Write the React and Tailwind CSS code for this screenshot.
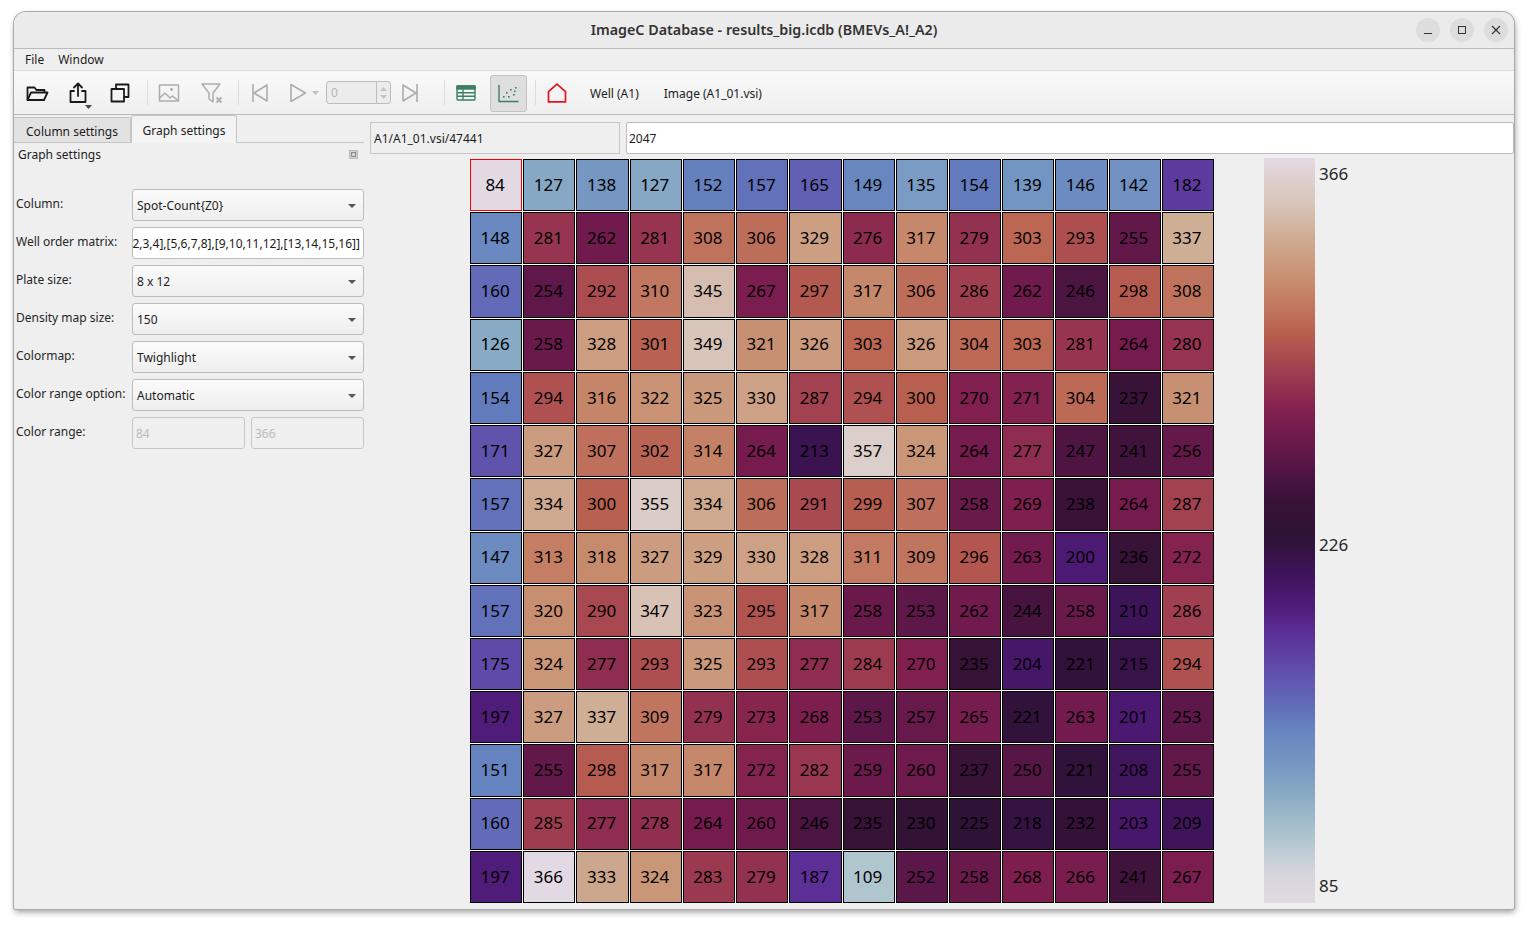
const rows = [
  [84, 127, 138, 127, 152, 157, 165, 149, 135, 154, 139, 146, 142, 182],
  [148, 281, 262, 281, 308, 306, 329, 276, 317, 279, 303, 293, 255, 337],
  [160, 254, 292, 310, 345, 267, 297, 317, 306, 286, 262, 246, 298, 308],
  [126, 258, 328, 301, 349, 321, 326, 303, 326, 304, 303, 281, 264, 280],
  [154, 294, 316, 322, 325, 330, 287, 294, 300, 270, 271, 304, 237, 321],
  [171, 327, 307, 302, 314, 264, 213, 357, 324, 264, 277, 247, 241, 256],
  [157, 334, 300, 355, 334, 306, 291, 299, 307, 258, 269, 238, 264, 287],
  [147, 313, 318, 327, 329, 330, 328, 311, 309, 296, 263, 200, 236, 272],
  [157, 320, 290, 347, 323, 295, 317, 258, 253, 262, 244, 258, 210, 286],
  [175, 324, 277, 293, 325, 293, 277, 284, 270, 235, 204, 221, 215, 294],
  [197, 327, 337, 309, 279, 273, 268, 253, 257, 265, 221, 263, 201, 253],
  [151, 255, 298, 317, 317, 272, 282, 259, 260, 237, 250, 221, 208, 255],
  [160, 285, 277, 278, 264, 260, 246, 235, 230, 225, 218, 232, 203, 209],
  [197, 366, 333, 324, 283, 279, 187, 109, 252, 258, 268, 266, 241, 267],
];

// twilight colormap, read off the colour bar
const stops = [
  [0, "#e2d9e2"], [0.04, "#d5d6db"], [0.085, "#b0c6cf"], [0.12, "#99b7c8"], [0.15, "#87a8c4"],
  [0.19, "#7496c2"], [0.22, "#6b8bc1"], [0.24, "#6380bd"], [0.256, "#6172ba"], [0.285, "#6160b3"],
  [0.32, "#5f4aa8"], [0.363, "#5b2f96"], [0.4, "#4f1b78"], [0.41, "#4c1a73"], [0.423, "#461669"],
  [0.445, "#3e1458"], [0.484, "#30123a"], [0.5, "#2f1336"], [0.54, "#371237"], [0.573, "#4b1441"],
  [0.595, "#5c1749"], [0.615, "#6a194b"], [0.635, "#741b4e"], [0.66, "#82204f"],
  [0.7, "#983650"], [0.73, "#a84850"], [0.765, "#b8604f"], [0.797, "#c0755f"], [0.826, "#c6886a"],
  [0.86, "#cb9b7e"], [0.897, "#cfae96"], [0.932, "#d7c2b5"], [0.968, "#dccfcb"], [1, "#e3d9e4"],
];

const hex = (c) => [1, 3, 5].map((i) => parseInt(c.slice(i, i + 2), 16));

const colorOf = (v) => {
  const t = Math.min(1, Math.max(0, (v - 85) / 281));
  let i = 0;
  while (i < stops.length - 2 && stops[i + 1][0] < t) i++;
  const [t0, c0] = stops[i];
  const [t1, c1] = stops[i + 1];
  const f = (t - t0) / (t1 - t0);
  const a = hex(c0);
  const b = hex(c1);
  return `rgb(${a.map((x, k) => Math.round(x + (b[k] - x) * f)).join(",")})`;
};

const barGradient = `linear-gradient(to top, ${stops.map(([t, c]) => `${c} ${t * 100}%`).join(", ")})`;

const Arrow = () => (
  <svg width="8" height="4" viewBox="0 0 8 4" className="shrink-0"><path d="M0 0h8L4 4z" fill="#555" /></svg>
);

const Sep = ({ className }) => <div className={`w-px h-[25px] bg-[#dcdcdc] ${className}`} />;

const FolderIcon = () => (
  <svg width="24" height="24" viewBox="0 0 24 24" fill="none" stroke="#1a1a1a" strokeWidth="1.8" strokeLinejoin="round">
    <path d="M2.5 19V6.5h7l2 2.5h8v2.5" />
    <path d="M2.5 19l3.5-7.5h16.5L19 19z" />
  </svg>
);

const ShareIcon = () => (
  <svg width="24" height="24" viewBox="0 0 24 24" fill="none" stroke="#1a1a1a" strokeWidth="1.8" strokeLinejoin="round" strokeLinecap="round">
    <path d="M8 10H4.5v11h15V10H16" />
    <path d="M12 15V2.5M8 6.5l4-4 4 4" />
  </svg>
);

const CopyIcon = () => (
  <svg width="24" height="24" viewBox="0 0 24 24" fill="none" stroke="#1a1a1a" strokeWidth="1.8" strokeLinejoin="round">
    <path d="M8 8V3.5h12.5V16H16" />
    <rect x="3.5" y="8" width="12.5" height="12.5" />
  </svg>
);

const ImageIcon = () => (
  <svg width="22" height="22" viewBox="0 0 22 22" fill="none" stroke="#adadad" strokeWidth="1.5" strokeLinejoin="round">
    <rect x="1.5" y="3" width="19" height="16" />
    <path d="M1.5 16l5.5-5 5 5 2.5-2 6 5" />
    <circle cx="13.5" cy="7.5" r="0.7" fill="#adadad" />
  </svg>
);

const FilterXIcon = () => (
  <svg width="24" height="24" viewBox="0 0 24 24" fill="none" stroke="#adadad" strokeWidth="1.5" strokeLinejoin="round">
    <path d="M2 3h18l-7 9v9l-4-3v-6z" />
    <path d="M16.5 16.5l5 5M21.5 16.5l-5 5" strokeWidth="1.8" />
  </svg>
);

const PrevIcon = () => (
  <svg width="18" height="20" viewBox="0 0 18 20" fill="none" stroke="#adadad" strokeWidth="1.6" strokeLinejoin="round">
    <path d="M2 1v18M16 2v16L3 10z" />
  </svg>
);

const PlayIcon = () => (
  <svg width="18" height="20" viewBox="0 0 18 20" fill="none" stroke="#adadad" strokeWidth="1.6" strokeLinejoin="round">
    <path d="M2 1.5v17L16.5 10z" />
  </svg>
);

const NextIcon = () => (
  <svg width="18" height="20" viewBox="0 0 18 20" fill="none" stroke="#adadad" strokeWidth="1.6" strokeLinejoin="round">
    <path d="M16 1v18M2 2v16l13-8z" />
  </svg>
);

const TableIcon = () => (
  <svg width="20" height="16" viewBox="0 0 20 16" fill="none" stroke="#3a7f62" strokeWidth="1.4">
    <rect x="1" y="1" width="18" height="14" rx="1" />
    <rect x="1" y="1" width="18" height="3" fill="#3a7f62" />
    <path d="M1 7.7h18M1 11.2h18M7 4v11" />
  </svg>
);

const ScatterIcon = () => (
  <svg width="21" height="19" viewBox="0 0 21 19" fill="none">
    <path d="M1 1v16.5h19.5" stroke="#3a7f62" strokeWidth="1.4" />
    <g fill="#3a7f62">
      <rect x="5" y="12" width="1.6" height="1.6" />
      <rect x="8" y="8" width="1.6" height="1.6" />
      <rect x="10" y="12" width="1.6" height="1.6" />
      <rect x="12" y="5" width="1.6" height="1.6" />
      <rect x="15" y="10" width="1.6" height="1.6" />
      <rect x="17" y="3" width="1.6" height="1.6" />
      <rect x="16" y="6.5" width="1.6" height="1.6" />
    </g>
  </svg>
);

const HomeIcon = () => (
  <svg width="20" height="20" viewBox="0 0 20 20" fill="none" stroke="#e0141c" strokeWidth="1.7" strokeLinejoin="miter">
    <path d="M1.5 18.8V8.7L10 1.2l8.5 7.5v10.1z" />
  </svg>
);

const Combo = ({ value }) => (
  <div className="flex items-center justify-between w-[232px] h-8 pl-[4px] pr-[7px] pt-[2px] border border-[#bcbcbc] rounded-[3px] bg-gradient-to-b from-[#fbfbfb] to-[#eeeeee] text-[#1c1c1c]">
    <span>{value}</span>
    <Arrow />
  </div>
);

const FormRow = ({ label, children }) => (
  <div className="flex items-center h-8 mb-[6px]">
    <span className="w-[118px] pl-[2px] -mt-[2px] whitespace-nowrap text-[#262626]">{label}</span>
    {children}
  </div>
);

export default function App() {
  return (
    <div className="h-[926px] w-[1528px] bg-white pt-3 pl-[14px] overflow-hidden font-['Noto_Sans',sans-serif] text-[12px] text-[#1c1c1c]">
      <div className="w-[1500px] h-[897px] rounded-t-[12px] rounded-b-[2px] overflow-hidden bg-[#efefef] flex flex-col shadow-[0_0_0_1px_#a8a8a8,1px_3px_6px_rgba(0,0,0,0.4)]">
        {/* title bar */}
        <div className="grid grid-cols-[1fr_auto_1fr] items-center h-[37px] shrink-0 bg-[#ebebeb] border-b border-[#bbbbbb]">
          <div />
          <div className="text-[14.3px] font-semibold text-[#333333] -mt-[1px]">ImageC Database - results_big.icdb (BMEVs_A!_A2)</div>
          <div className="flex justify-end gap-[10px] pr-[6px]">
            <div className="w-6 h-6 rounded-full bg-[#dddddd] flex items-center justify-center">
              <div className="w-[8px] h-[1.5px] bg-[#333333] mt-[7px]" />
            </div>
            <div className="w-6 h-6 rounded-full bg-[#dddddd] flex items-center justify-center">
              <div className="w-[8px] h-[8px] border border-[#333333]" />
            </div>
            <div className="w-6 h-6 rounded-full bg-[#dddddd] flex items-center justify-center">
              <svg width="10" height="10" viewBox="0 0 10 10" stroke="#333333" strokeWidth="1.2"><path d="M1 1l8 8M9 1l-8 8" /></svg>
            </div>
          </div>
        </div>

        {/* menu */}
        <div className="flex items-center gap-[14px] h-[22px] shrink-0 pl-[11px] bg-[#efefef] border-b border-[#dcdcdc]">
          <span>File</span>
          <span>Window</span>
        </div>

        {/* toolbar */}
        <div className="flex items-center h-[44px] shrink-0 bg-gradient-to-b from-[#f9f9f9] to-[#efefef] border-b border-[#bbbbbb]">
          <div className="ml-[11px] w-6"><FolderIcon /></div>
          <div className="ml-[17px] w-6 relative">
            <ShareIcon />
            <svg width="7" height="4" viewBox="0 0 7 4" className="absolute left-[19px] top-[24px]"><path d="M0 0h7L3.5 4z" fill="#444" /></svg>
          </div>
          <div className="ml-[18px] w-6"><CopyIcon /></div>
          <Sep className="ml-[15px]" />
          <div className="ml-[10px] w-[22px]"><ImageIcon /></div>
          <div className="ml-[20px] w-6"><FilterXIcon /></div>
          <Sep className="ml-[14px]" />
          <div className="ml-[12px] w-[18px]"><PrevIcon /></div>
          <div className="ml-[20px] w-[18px]"><PlayIcon /></div>
          <svg width="7" height="4" viewBox="0 0 7 4" className="ml-[5px]"><path d="M0 0h7L3.5 4z" fill="#c0c0c0" /></svg>
          <div className="ml-[7px] w-[65px] h-[23px] flex items-center border border-[#bdbdbd] rounded-[3px] bg-[#ececec]">
            <span className="flex-1 pl-[4px] text-[#b5b5b5]">0</span>
            <div className="w-[14px] h-full border-l border-[#bdbdbd] flex flex-col items-center justify-center gap-[4px]">
              <svg width="7" height="4" viewBox="0 0 7 4"><path d="M0 4h7L3.5 0z" fill="#c4c4c4" /></svg>
              <svg width="7" height="4" viewBox="0 0 7 4"><path d="M0 0h7L3.5 4z" fill="#c4c4c4" /></svg>
            </div>
          </div>
          <div className="ml-[10px] w-[18px]"><NextIcon /></div>
          <Sep className="ml-[25px]" />
          <div className="ml-[11px] w-5"><TableIcon /></div>
          <div className="ml-[14px] mt-px w-[37px] h-[37px] flex items-center justify-center border border-[#c2c2c2] rounded-[3px] bg-[#dedede]"><ScatterIcon /></div>
          <Sep className="ml-[8px]" />
          <div className="ml-[11px] w-5"><HomeIcon /></div>
          <span className="ml-[23px] pt-[2px]">Well (A1)</span>
          <span className="ml-[25px] pt-[2px]">Image (A1_01.vsi)</span>
        </div>

        <div className="flex flex-1 min-h-0">
          {/* settings */}
          <div className="w-[356px] shrink-0">
            <div className="flex items-end h-[28px] pr-[6px]">
              <div className="w-[117px] h-[26px] flex items-center justify-center pt-[3px] bg-[#e2e2e2] border border-[#c4c4c4] border-l-0 rounded-tr-[2px]">Column settings</div>
              <div className="w-[106px] h-[28px] flex items-center justify-center pt-[2px] bg-[#f3f3f3] border border-b-0 border-[#c4c4c4] rounded-t-[3px]">Graph settings</div>
              <div className="flex-1 border-b border-[#c4c4c4]" />
            </div>
            <div className="flex items-center justify-between pl-[4px] pr-[12px] pt-[1px] h-[22px]">
              <span>Graph settings</span>
              <div className="w-[9px] h-[9px] bg-[#d2d2d2] border border-[#bcbcbc] flex items-center justify-center">
                <div className="w-[5px] h-[5px] border border-[#8a8a8a]" />
              </div>
            </div>
            <div className="mt-[24px]">
              <FormRow label="Column:"><Combo value="Spot-Count{Z0}" /></FormRow>
              <FormRow label="Well order matrix:">
                <div className="w-[232px] h-8 flex justify-end items-center pr-[3px] pt-[1px] whitespace-nowrap bg-white border border-[#bcbcbc] rounded-[3px]">
                  <span>2,3,4],[5,6,7,8],[9,10,11,12],[13,14,15,16]]</span>
                </div>
              </FormRow>
              <FormRow label="Plate size:"><Combo value="8 x 12" /></FormRow>
              <FormRow label="Density map size:"><Combo value="150" /></FormRow>
              <FormRow label="Colormap:"><Combo value="Twighlight" /></FormRow>
              <FormRow label="Color range option:"><Combo value="Automatic" /></FormRow>
              <FormRow label="Color range:">
                <div className="flex gap-[6px] w-[232px]">
                  <div className="w-[113px] h-8 flex items-center pl-[3px] pt-[2px] text-[#bdbdbd] bg-[#efefef] border border-[#c6c6c6] rounded-[3px]">84</div>
                  <div className="w-[113px] h-8 flex items-center pl-[3px] pt-[2px] text-[#bdbdbd] bg-[#efefef] border border-[#c6c6c6] rounded-[3px]">366</div>
                </div>
              </FormRow>
            </div>
          </div>

          {/* heatmap */}
          <div className="flex-1 min-w-0 pt-[7px]">
            <div className="flex gap-[6px] h-[32px]">
              <div className="w-[250px] flex items-center pl-[3px] pt-[2px] bg-[#efefef] border border-[#c6c6c6]">A1/A1_01.vsi/47441</div>
              <div className="flex-1 flex items-center pl-[2px] pt-[2px] bg-white border border-[#bcbcbc] rounded-[2px]">2047</div>
            </div>
            <div className="flex mt-[4px]">
              <div className="ml-[100px] w-[744px] h-[744px] mt-px grid grid-cols-[repeat(14,1fr)] grid-rows-[repeat(14,1fr)] gap-px bg-white">
                {rows.flat().map((v, i) => (
                  <div
                    key={i}
                    className={`flex items-center justify-center pr-[2px] pb-[1px] text-[17px] text-black border ${i === 0 ? "border-[#f00000]" : "border-black"}`}
                    style={{ backgroundColor: colorOf(v) }}
                  >
                    {v}
                  </div>
                ))}
              </div>
              <div className="ml-[50px] w-[51px] h-[745px]" style={{ background: barGradient }} />
              <div className="ml-[4px] h-[745px] flex flex-col text-[17px] leading-[24px] text-[#262626]">
                <span className="mt-[4px]">366</span>
                <span className="mt-[347px]">226</span>
                <span className="mt-[317px]">85</span>
              </div>
            </div>
          </div>
        </div>
      </div>
    </div>
  );
}
